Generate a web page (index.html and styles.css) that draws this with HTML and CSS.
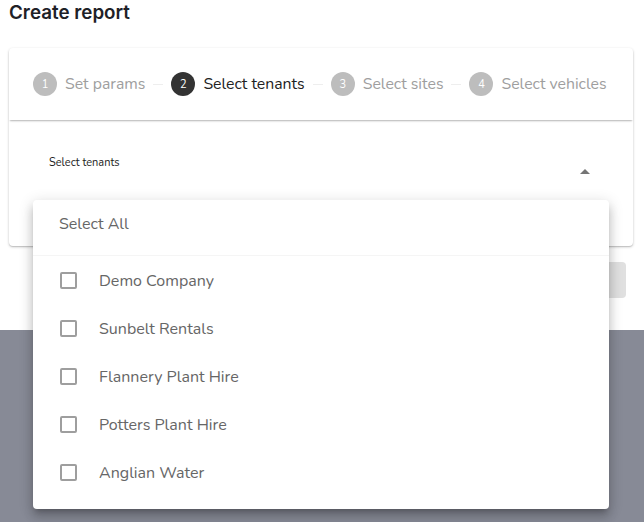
FILE: index.html
```html
<!DOCTYPE html>
<html>
<head>
<meta charset="utf-8">
<link rel="stylesheet" href="styles.css">
</head>
<body>
<div class="top">
  <h1 class="title">Create report</h1>
  <div class="card">
    <div class="stepper">
      <div class="step"><span class="circle">1</span><span class="label">Set params</span></div>
      <span class="connector"></span>
      <div class="step active"><span class="circle">2</span><span class="label">Select tenants</span></div>
      <span class="connector"></span>
      <div class="step"><span class="circle">3</span><span class="label">Select sites</span></div>
      <span class="connector"></span>
      <div class="step"><span class="circle">4</span><span class="label">Select vehicles</span></div>
    </div>
    <div class="card-body">
      <div class="select">
        <span class="select-label">Select tenants</span>
        <svg class="arrow" width="10" height="5" viewBox="0 0 10 5"><path d="M0 5 L5 0 L10 5 Z" fill="#757575"/></svg>
      </div>
    </div>
  </div>
  <div class="actions"><button class="btn">Next</button></div>
</div>
<div class="footer"></div>

<div class="menu">
  <div class="menu-all">Select All</div>
  <ul class="menu-list">
    <li class="item"><span class="check"></span><span>Demo Company</span></li>
    <li class="item"><span class="check"></span><span>Sunbelt Rentals</span></li>
    <li class="item"><span class="check"></span><span>Flannery Plant Hire</span></li>
    <li class="item"><span class="check"></span><span>Potters Plant Hire</span></li>
    <li class="item"><span class="check"></span><span>Anglian Water</span></li>
  </ul>
</div>
</body>
</html>
```

FILE: styles.css
```css
* { box-sizing: border-box; }
html, body { margin: 0; padding: 0; height: 100%; }
body {
  font-family: "Nunito", "Lato", "Noto Sans", sans-serif;
  background: #878a96;
  position: relative;
  overflow: hidden;
}
.top {
  background: #ffffff;
  height: 330px;
  padding: 0 11px 0 9px;
}
.title {
  margin: 0;
  font-family: "Inter", "Roboto", sans-serif;
  font-weight: 600;
  font-size: 18.8px;
  line-height: 25px;
  color: #1e2127;
}
.card {
  margin-top: 23px;
  background: #fff;
  border-radius: 4px;
  box-shadow: 0 1px 3px rgba(0,0,0,0.2), 0 1px 1px rgba(0,0,0,0.12);
  height: 198px;
}
.stepper {
  height: 72px;
  display: flex;
  align-items: center;
  padding: 0 24px;
  box-shadow: 0 2px 2px -1px rgba(0,0,0,0.3);
  border-radius: 4px 4px 0 0;
}
.step {
  display: flex;
  align-items: center;
  gap: 8px;
  flex: none;
  white-space: nowrap;
}
.circle {
  width: 24px;
  height: 24px;
  border-radius: 50%;
  background: #bdbdbd;
  color: #fff;
  font-size: 11px;
  display: flex;
  align-items: center;
  justify-content: center;
}
.label {
  font-size: 15.8px;
  color: #9e9e9e;
}
.step.active .circle { background: #333333; }
.step.active .label { color: #222222; }
.connector {
  width: 10px;
  height: 1px;
  background: #eeeeee;
  margin: 0 8px;
  flex: none;
}
.card-body {
  padding: 23px 24px 0;
}
.select {
  height: 57px;
  position: relative;
  padding: 7px 16px 0;
  border-radius: 4px;
}
.select-label {
  font-size: 11px;
  color: #222;
}
.arrow {
  position: absolute;
  right: 19px;
  top: 26px;
}
.actions {
  display: flex;
  justify-content: flex-end;
  padding: 16px 7px 0 0;
}
.btn {
  width: 88px;
  height: 36px;
  border: none;
  border-radius: 4px;
  background: #e0e0e0;
  color: #a6a6a6;
  font-family: inherit;
  font-size: 14px;
}
.footer { height: 192px; }

.menu {
  position: absolute;
  left: 33px;
  top: 200px;
  width: 576px;
  height: 309px;
  background: #fff;
  border-radius: 4px;
  box-shadow: 0 5px 5px -3px rgba(0,0,0,0.2), 0 8px 10px 1px rgba(0,0,0,0.14), 0 3px 14px 2px rgba(0,0,0,0.12);
}
.menu-all {
  height: 56px;
  padding: 0 26px 8px;
  display: flex;
  align-items: center;
  font-size: 16px;
  color: #666;
  border-bottom: 1px solid #f5f5f5;
}
.menu-list {
  list-style: none;
  margin: 0;
  padding: 0;
}
.item {
  height: 48px;
  display: flex;
  align-items: center;
  padding: 1px 0 0 27px;
  font-size: 16px;
  color: #666;
}
.check {
  width: 17px;
  height: 17px;
  border: 2px solid #9e9e9e;
  border-radius: 2px;
  margin-right: 22px;
  flex: none;
}
```
